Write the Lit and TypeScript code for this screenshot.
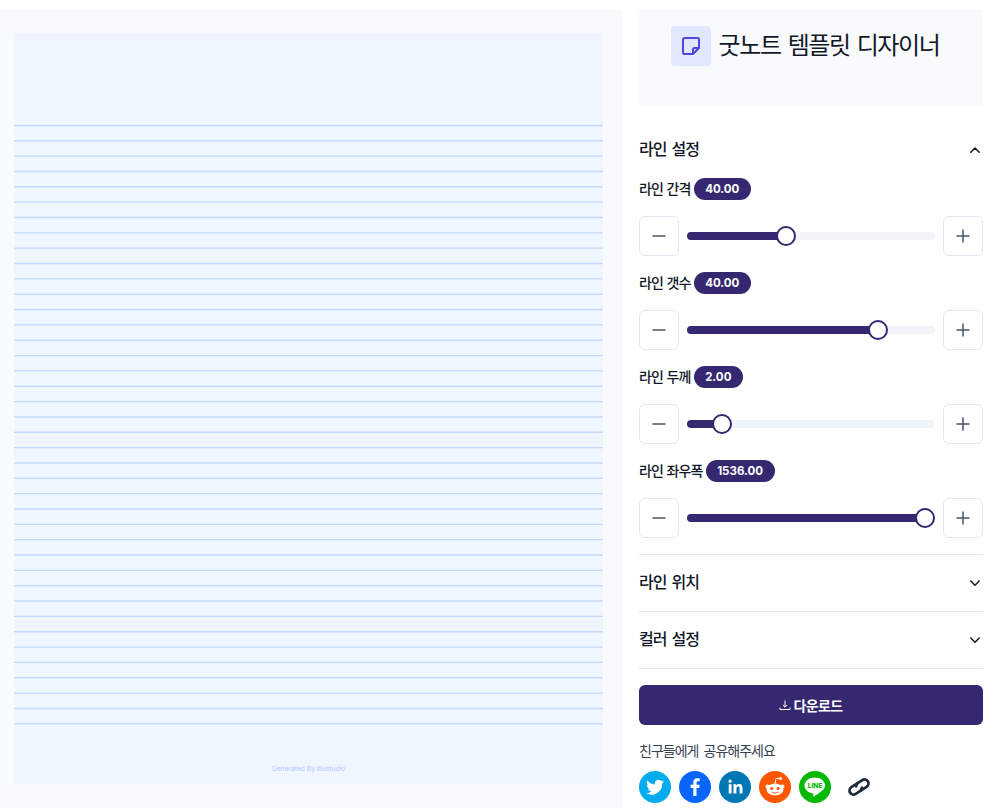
import { LitElement, html, css, svg } from "lit";
import { customElement } from "lit/decorators.js";

const sliders = [
  { label: "라인 간격", value: "40.00", pct: 39 },
  { label: "라인 갯수", value: "40.00", pct: 79.4 },
  { label: "라인 두께", value: "2.00", pct: 11 },
  { label: "라인 좌우폭", value: "1536.00", pct: 100 },
];

const chevron = (up: boolean) => html`<svg class="chev" viewBox="0 0 16 16" width="16" height="16" fill="none" stroke="#111827" stroke-width="1.5" stroke-linecap="round" stroke-linejoin="round"><path d=${up ? "M3.8 10.200 8 6 12.200 10.200" : "M3.800 6 8 10.200 12.200 6"}></path></svg>`;

const lineYs = Array.from({ length: 40 }, (_, i) => 241 + i * 40);

@customElement("app-root")
export class AppRoot extends LitElement {
  static styles = css`
    :host { --navy: #352871; display: block; width: 995px; height: 808px; overflow: hidden; background: #fff;
      font-family: "Noto Sans CJK KR", "Noto Sans", sans-serif; color: #111827; }
    .page { display: grid; grid-template-columns: 623px 344px; column-gap: 16px; padding-top: 9px; height: 808px; box-sizing: border-box; }
    .preview { background: #f9fafb; padding: 24px 20px 0 14px; height: 799px; box-sizing: border-box; border-top-right-radius: 4px; }
    .sheet { display: block; width: 589px; height: 751px; }
    .side { display: flex; flex-direction: column; }
    .head { background: #f9fafb; height: 97px; display: flex; align-items: flex-start; justify-content: center; gap: 8px; padding: 17px 12px 0 0; box-sizing: border-box; }
    .logo { width: 40px; height: 40px; border-radius: 4px; background: #e0e7ff; display: flex; align-items: center; justify-content: center; }
    .title { font-size: 24px; line-height: 36px; font-weight: 400; color: #111827; letter-spacing: -1.4px; word-spacing: 3px; }
    .sec-head { display: flex; justify-content: space-between; align-items: center; font-size: 16px; letter-spacing: -1px; word-spacing: 2.5px; font-weight: 500; height: 56px; }
    .sec-head span { padding-bottom: 5px; }
    .sec-head.first { margin-top: 16px; }
    .rows { display: flex; flex-direction: column; }
    .label { display: flex; align-items: center; gap: 3px; font-size: 14px; letter-spacing: -0.85px; word-spacing: 1.2px; font-weight: 500; height: 22px; }
    .label .txt { padding-bottom: 3px; }
    .pill { background: var(--navy); color: #fff; font-family: Inter, sans-serif; font-weight: 700; font-size: 11.5px; letter-spacing: 0; height: 22px; border-radius: 11px; padding: 0 11.5px; display: flex; align-items: center; }
    .ctl { display: flex; align-items: center; gap: 8px; margin: 16px 0; height: 40px; }
    .btn { width: 40px; height: 40px; box-sizing: border-box; border: 1px solid #e2e8f0; border-radius: 6px; background: #fff; display: flex; align-items: center; justify-content: center; padding: 0; flex: none; }
    .track { flex: 1; height: 8px; border-radius: 4px; background: #f1f5f9; position: relative; }
    .fill { height: 8px; border-radius: 4px; background: var(--navy); }
    .thumb { position: absolute; top: -6px; width: 20px; height: 20px; box-sizing: border-box; border-radius: 50%; border: 2px solid var(--navy); background: #fff; }
    .sep { border-top: 1px solid #e2e8f0; }
    .dl { margin-top: 16px; height: 40px; border-radius: 6px; background: var(--navy); color: #fff; font-size: 14px; letter-spacing: -0.6px; font-weight: 700; display: flex; align-items: center; justify-content: center; gap: 2px; }
    .share { margin-top: 15px; font-size: 14px; letter-spacing: -1px; word-spacing: 3px; line-height: 20px; color: #374151; }
    .icons { display: flex; gap: 8px; margin-top: 11px; align-items: center; }
    .s { width: 32px; height: 32px; display: block; }
    .link { width: 24px; height: 24px; margin-left: 8px; }
  `;

  private minus() {
    return html`<svg viewBox="0 0 16 16" width="16" height="16" stroke="#475569" stroke-width="1.5" stroke-linecap="round"><path d="M2 8h12"></path></svg>`;
  }
  private plus() {
    return html`<svg viewBox="0 0 16 16" width="16" height="16" stroke="#475569" stroke-width="1.5" stroke-linecap="round"><path d="M2 8h12M8 2v12"></path></svg>`;
  }

  render() {
    return html`<div class="page">
      <div class="preview">
        <svg class="sheet" viewBox="0 0 1536 1958" preserveAspectRatio="none">
          <rect width="1536" height="1958" fill="#eff6ff"></rect>
          ${lineYs.map((y) => svg`<line x1="0" x2="1536" y1=${y} y2=${y} stroke="#c7d8fe" stroke-width="3.600"></line>`)}
          <text x="768" y="1924" text-anchor="middle" font-family="Inter, sans-serif" font-size="17.500" fill="#b4c6fc">Generated By Illustudio</text>
        </svg>
      </div>
      <div class="side">
        <div class="head">
          <div class="logo">
            <svg viewBox="0 0 24 24" width="24" height="24" fill="none" stroke="#4f46e5" stroke-width="2" stroke-linejoin="round"><path d="M4 5.500A1.500 1.500 0 0 1 5.500 4h13A1.500 1.500 0 0 1 20 5.500V14l-6 6H5.500A1.500 1.500 0 0 1 4 18.500z"></path><path d="M14 20v-4.500a1.500 1.500 0 0 1 1.500-1.500H20"></path></svg>
          </div>
          <div class="title">굿노트 템플릿 디자이너</div>
        </div>
        <div class="sec-head first"><span>라인 설정</span>${chevron(true)}</div>
        <div class="rows">
          ${sliders.map((s) => html`
            <div class="label"><span class="txt">${s.label}</span><span class="pill">${s.value}</span></div>
            <div class="ctl">
              <div class="btn">${this.minus()}</div>
              <div class="track">
                <div class="fill" style="width:calc(${s.pct}% - ${(s.pct / 100) * 20 - 10}px)"></div>
                <div class="thumb" style="left:calc(${s.pct}% - ${(s.pct / 100) * 20}px)"></div>
              </div>
              <div class="btn">${this.plus()}</div>
            </div>`)}
        </div>
        <div class="sep"></div>
        <div class="sec-head"><span>라인 위치</span>${chevron(false)}</div>
        <div class="sep"></div>
        <div class="sec-head"><span>컬러 설정</span>${chevron(false)}</div>
        <div class="sep"></div>
        <div class="dl">
          <svg viewBox="0 0 12 12" width="12" height="12" fill="none" stroke="#fff" stroke-width="1"><path d="M6 1.500v6.500M3.800 6 6 8.200 8.200 6M1 8.500v2h10v-2"></path></svg>
          <span>다운로드</span>
        </div>
        <div class="share">친구들에게 공유해주세요</div>
        <div class="icons">
          <svg class="s" viewBox="0 0 32 32"><circle cx="16" cy="16" r="16" fill="#00aced"></circle><path fill="#fff" d="M25 10.600c-.7.300-1.400.5-2.100.6.800-.5 1.300-1.200 1.600-2-.7.400-1.500.7-2.300.9a3.700 3.700 0 0 0-6.300 3.400c-3.100-.2-5.800-1.600-7.600-3.900-1 1.700-.5 3.800 1.100 4.900-.6 0-1.200-.2-1.700-.5 0 1.800 1.300 3.300 3 3.700-.5.100-1.100.2-1.700.1.500 1.500 1.900 2.500 3.400 2.600a7.400 7.400 0 0 1-5.400 1.500 10.500 10.500 0 0 0 16.200-9.300c.7-.5 1.300-1.200 1.800-1.900z"></path></svg>
          <svg class="s" viewBox="0 0 32 32"><circle cx="16" cy="16" r="16" fill="#0866ff"></circle><path fill="#fff" d="M17.500 25v-8h2.700l.4-3.200h-3.100v-2c0-.9.300-1.500 1.600-1.500h1.600V7.400c-.3 0-1.300-.1-2.400-.1-2.400 0-4 1.400-4 4.100v2.400h-2.700V17h2.700v8z"></path></svg>
          <svg class="s" viewBox="0 0 32 32"><circle cx="16" cy="16" r="16" fill="#0077b5"></circle><path fill="#fff" d="M9.700 13.200h2.900v9.300H9.700zM11.100 8.600a1.700 1.700 0 1 1 0 3.400 1.700 1.700 0 0 1 0-3.400zM14.400 13.200h2.800v1.300c.4-.8 1.400-1.500 2.800-1.500 3 0 3.500 1.900 3.500 4.400v5.100h-2.900V18c0-1.100 0-2.400-1.500-2.400s-1.700 1.100-1.700 2.300v4.600h-2.900z"></path></svg>
          <svg class="s" viewBox="0 0 32 32"><circle cx="16" cy="16" r="16" fill="#ff5700"></circle><ellipse cx="16" cy="18.500" rx="8.500" ry="6" fill="#fff"></ellipse><circle cx="8.500" cy="15.500" r="2" fill="#fff"></circle><circle cx="23.500" cy="15.500" r="2" fill="#fff"></circle><circle cx="21.500" cy="7.500" r="1.500" fill="#fff"></circle><path d="M16 13l1-5.500 4.500 0" fill="none" stroke="#fff" stroke-width="1"></path><circle cx="12.800" cy="17.500" r="1.600" fill="#ff5700"></circle><circle cx="19.200" cy="17.500" r="1.600" fill="#ff5700"></circle><path d="M12.800 21c2 1.400 4.400 1.400 6.400 0" fill="none" stroke="#ff5700" stroke-width="1"></path></svg>
          <svg class="s" viewBox="0 0 32 32"><circle cx="16" cy="16" r="16" fill="#00b900"></circle><path fill="#fff" d="M16 6.500c-5.800 0-10.500 3.500-10.500 8 0 4 3.500 7.300 8.500 7.900.9.200.5 1-.1 2.800 0 .4.300.5 1 .2 1.500-.8 6.200-3.700 8.300-5.800 1.800-1.500 2.800-3.100 2.800-5.100 0-4.500-4.700-8-10-8z"></path><text x="16" y="17" text-anchor="middle" font-family="Inter, sans-serif" font-weight="800" font-size="6.500" fill="#00b900">LINE</text></svg>
          <svg class="s link" viewBox="0 0 24 24" fill="none" stroke="#1e293b" stroke-width="2.800" stroke-linecap="round"><g transform="rotate(-33 12 12)"><path d="M12.500 8H5.500a4 4 0 0 0 0 8H11a4 4 0 0 0 3-1.900"></path><path d="M11.500 16h7a4 4 0 0 0 0-8H13a4 4 0 0 0-3 1.900"></path></g></svg>
        </div>
      </div>
    </div>`;
  }
}
